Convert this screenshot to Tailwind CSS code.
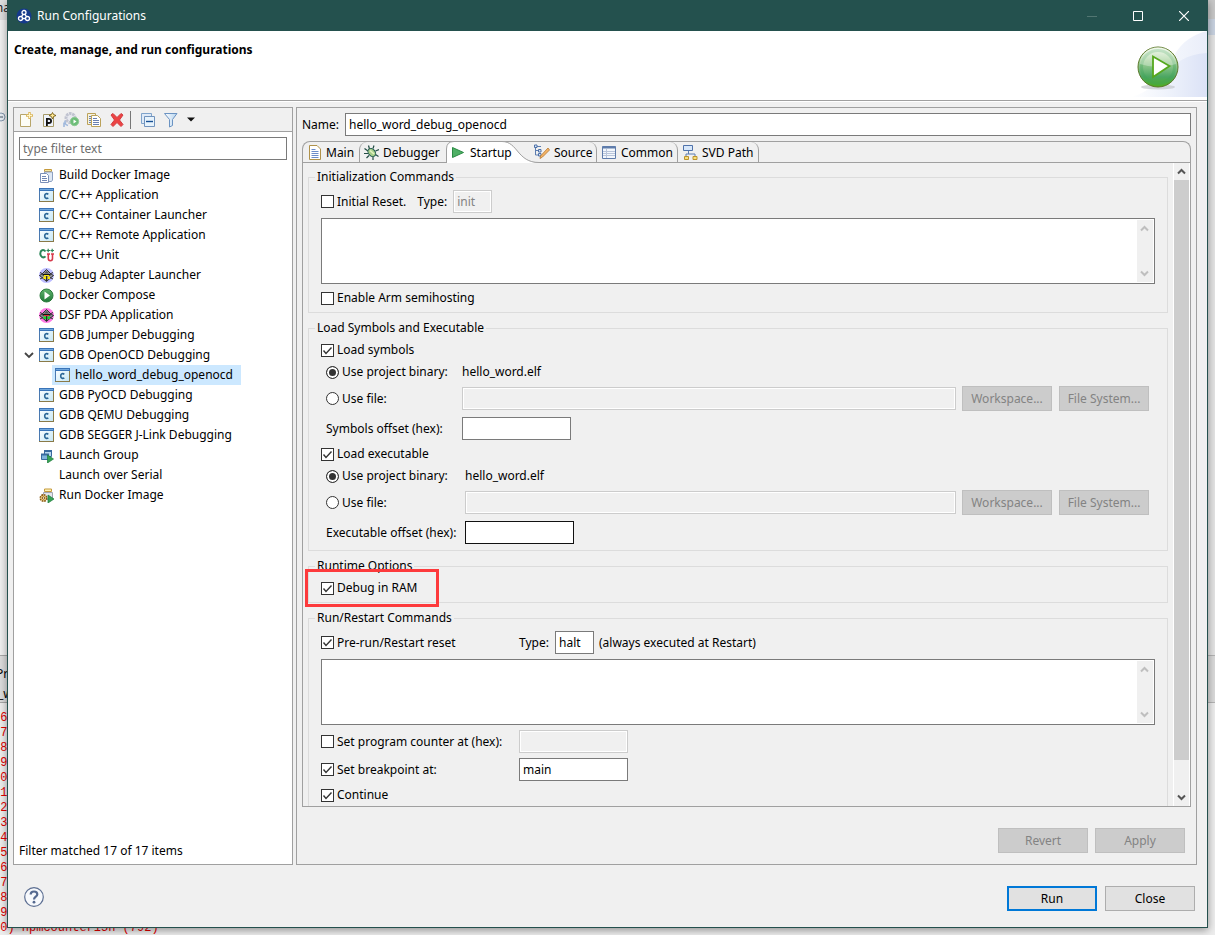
<!DOCTYPE html>
<html lang="en">
<head>
<meta charset="utf-8">
<title>Run Configurations</title>
<script src="https://cdn.jsdelivr.net/npm/@tailwindcss/browser@4"></script>
</head>
<body class="relative h-screen overflow-hidden bg-[#e4e4e4] font-['Noto_Sans','Noto_Sans_CJK_SC',sans-serif] text-xs text-black">

<svg class="absolute size-0" aria-hidden="true">
  <defs>
    <linearGradient id="gWin" x1="0" y1="0" x2="1" y2="1"><stop offset="0" stop-color="#fff"/><stop offset="1" stop-color="#c4e6f6"/></linearGradient>
    <linearGradient id="gGreen" x1="0" y1="0" x2="0" y2="1"><stop offset="0" stop-color="#5fb36c"/><stop offset="1" stop-color="#1f7a38"/></linearGradient>
    <linearGradient id="gBall" x1="0" y1="0" x2="0" y2="1"><stop offset="0" stop-color="#f2f9ea"/><stop offset=".35" stop-color="#a5d19b"/><stop offset=".75" stop-color="#4ba661"/><stop offset="1" stop-color="#4fae1c"/></linearGradient>
    <linearGradient id="gWash" x1="0" y1="0" x2="1" y2="0"><stop offset="0" stop-color="#fff"/><stop offset=".5" stop-color="#eef2fb"/><stop offset="1" stop-color="#dbe2f6"/></linearGradient>
    <linearGradient id="gFunnel" x1="0" y1="0" x2="1" y2="0"><stop offset="0" stop-color="#fff"/><stop offset="1" stop-color="#b5d3ee"/></linearGradient>
  </defs>
  <symbol id="capp" viewBox="0 0 15 14">
    <rect x=".5" y=".5" width="14" height="13" fill="url(#gWin)" stroke="#8a7a48"/>
    <path d="M.5 13V.5" stroke="#4a79b0"/><path d="M0 1.500h15" stroke="#3a74b8" stroke-width="3"/><path d="M1 1.500h13" stroke="#6fa6dc"/>
    <path d="M9.300 6.300C8 5.200 5.700 5.500 5.700 8c0 2.500 2.300 2.900 3.600 1.800" fill="none" stroke="#2a6595" stroke-width="1.600"/>
  </symbol>
  <symbol id="build" viewBox="0 0 15 15">
    <path d="M5.500 1.500h7v2h-7z" fill="#f6e7a0" stroke="#c59a3c"/><path d="M5.500 4h8v8l-1 1.500h-7z" fill="#dfe8f4" stroke="#8da0c0"/>
    <path d="M1.500 5.500h6l2 2v7h-8z" fill="#fff" stroke="#7b90b8"/><path d="M3 8.500h4M3 10.500h5M3 12.500h5" stroke="#6f86b4"/>
  </symbol>
  <symbol id="cunit" viewBox="0 0 15 15">
    <path d="M6.500 3.500C4.500 1 1.300 2 1.300 5.500s3.200 5 5.200 2.800" fill="none" stroke="#2b8658" stroke-width="2"/>
    <path d="M7.500 2.500H11M9.200.800v3.400M11.500 2.500H15M13.200.800v3.400" stroke="#2b8658" stroke-width="1.200"/>
    <path d="M8 6h3M12 6h3M9.300 6v4.500c0 3 4.200 3 4.200 0V6" fill="none" stroke="#d63a4c" stroke-width="1.600"/>
  </symbol>
  <symbol id="adapter" viewBox="0 0 15 15">
    <circle cx="7.500" cy="7.500" r="7.500" fill="#bcbcff"/><path d="M7.500 1.500L12 6l2.500 1.500L12 9.500 7.500 13.500 3 9.500.5 7.500 3 6z" fill="#9a9aa4" stroke="#333"/><path d="M1 4.500l3 1.500M1 11l3-1.500M14 4.500L11 6M14 11l-3-1.500" stroke="#333"/>
    <path d="M5 5.500l2.500-2.500L10 5.500z" fill="#555"/><path d="M3.500 6h8v1.500h-8z" fill="#111"/><path d="M4.500 8.500H7V11H4.500zM8.500 8.500H11V11H8.500z" fill="#ffe800"/><path d="M7.700 7v6" stroke="#111"/><path d="M5 7.500h5" stroke="#ffe800"/>
  </symbol>
  <symbol id="dsf" viewBox="0 0 15 15">
    <circle cx="7.500" cy="7.500" r="7.500" fill="#ff7ae6"/><path d="M7.500 1.500L12 6l2.500 1.500L12 9.500 7.500 13.500 3 9.500.5 7.500 3 6z" fill="#8a8a90" stroke="#333"/><path d="M1 4.500l3 1.500M1 11l3-1.500M14 4.500L11 6M14 11l-3-1.500" stroke="#333"/>
    <path d="M5 5.500l2.500-2.500L10 5.500z" fill="#555"/><path d="M3.500 6h8v1.500h-8z" fill="#111"/><path d="M4.500 8.500H7V11H4.500zM8.500 8.500H11V11H8.500z" fill="#19d42c"/><path d="M7.700 7v6" stroke="#111"/><path d="M5 7.500h5" stroke="#e83030"/>
  </symbol>
  <symbol id="compose" viewBox="0 0 15 15">
    <circle cx="7.500" cy="7.500" r="6.500" fill="url(#gGreen)" stroke="#2b7a3c"/><path d="M5.500 3.500L11 7.500l-5.500 4z" fill="#fff"/>
  </symbol>
  <symbol id="group" viewBox="0 0 15 15">
    <path d="M5.500 2.500h7v6h-7z" fill="#b7d7ef" stroke="#386a9e"/><path d="M5 3h8" stroke="#386a9e" stroke-width="2"/>
    <path d="M2.500 6.500h7v5h-7z" fill="#7fb3dc" stroke="#386a9e"/><path d="M2 6.500h8" stroke="#386a9e" stroke-width="2"/><path d="M8.500 7l6 4-6 4z" fill="#37a256" stroke="#1d7a3a" stroke-width=".7"/>
  </symbol>
  <symbol id="rundocker" viewBox="0 0 15 15">
    <path d="M5.500 1h7v2.500h-7z" fill="#fff2b5" stroke="#c59a3c"/><path d="M4.500 4.500h9v7h-9z" fill="#e3e6ec" stroke="#a0a4b0"/>
    <circle cx="4.500" cy="10" r="3.200" fill="#f1d38a" stroke="#8b5a14" stroke-width="1.600" stroke-dasharray="1.700 .800"/><circle cx="4.500" cy="10" r="1.200" fill="#fff" stroke="#8b5a14"/><path d="M9 7l6 4-6 4z" fill="#37a256" stroke="#1d7a3a" stroke-width=".7"/>
  </symbol>
</svg>

<!-- workbench behind the dialog -->
<div class="absolute inset-0" aria-hidden="true">
  <div class="absolute left-0 top-0 h-[20px] w-2 overflow-hidden bg-[#dedede] text-[#222]"><span class="absolute -left-2">ma</span></div>
  <div class="absolute left-0 top-[20px] h-[635px] w-2 overflow-hidden bg-[#f0f0f0]"><svg class="absolute -left-1 top-[92px]" width="10" height="10"><circle cx="5" cy="5" r="4" fill="#e8eef4" stroke="#8598ae"/><path d="M3 5h4" stroke="#456"/></svg></div>
  <div class="absolute left-0 top-[655px] h-[48px] w-2 overflow-hidden border-y border-[#a8a8a8] bg-[#dcdcdc]"><span class="absolute -left-1 top-[10px]">Pr</span><span class="absolute -left-[2px] top-[30px]">_w</span></div>
  <div class="absolute bottom-0 left-0 top-[703px] w-full overflow-hidden bg-[#ededed] font-['Liberation_Mono',monospace] text-xs text-[#e00000]">
    <div class="-ml-[7px] pt-[8px] leading-[15px]">66<br>67<br>68<br>69<br>70<br>71<br>72<br>73<br>74<br>75<br>76<br>77<br>78<br>79<br>80) hpmcounter15h (792)</div>
  </div>
  <div class="absolute right-0 top-0 h-[19px] w-2 bg-[#c8c8c8]"></div>
  <div class="absolute right-0 top-[19px] h-[16px] w-2 bg-[#c8d2e0]"></div>
  <div class="absolute right-0 top-[655px] h-[48px] w-2 border-y border-[#b4b4b4] bg-[#dadada]"></div>
</div>

<div class="relative h-full px-[7px] pb-[7px]">
<main class="flex h-full flex-col border-x border-b border-[#24504d] bg-[#f0f0f0] shadow-[0_2px_8px_rgba(0,0,0,0.4)]">

  <header class="flex h-[31px] shrink-0 items-center bg-[#24514e] pl-2 text-white">
    <svg width="16" height="16" viewBox="0 0 16 16"><circle cx="8" cy="8" r="7.500" fill="#153a8c"/><g fill="none" stroke="#fff" stroke-width="1.300"><circle cx="8" cy="4.500" r="2"/><circle cx="4.500" cy="10.500" r="2"/><circle cx="11.500" cy="10.500" r="2"/><path d="M7 6.300L5.500 8.700M9 6.300l1.500 2.400M6.500 10.500h3"/></g></svg>
    <h1 class="ml-[5px] flex-1">Run Configurations</h1>
    <button class="flex h-full w-[46px] items-center justify-center" aria-label="Minimize" disabled><svg width="10" height="10"><path d="M0 5.500h10" stroke="#527672"/></svg></button>
    <button class="flex h-full w-[46px] items-center justify-center" aria-label="Maximize"><svg width="10" height="10"><path d="M.5.5h9v9h-9z" fill="none" stroke="#fff"/></svg></button>
    <button class="flex h-full w-[46px] items-center justify-center" aria-label="Close window"><svg width="10" height="10"><path d="M0 0l10 10M10 0L0 10" stroke="#fff" stroke-width="1.200"/></svg></button>
  </header>

  <section class="flex h-[70px] shrink-0 justify-between border-b border-[#a0a0a0] bg-white pl-1.5">
    <h2 class="pt-[11px] font-bold">Create, manage, and run configurations</h2>
    <svg width="76" height="66" viewBox="0 0 76 66">
      <path d="M0 66C12 64 34 50 40 30 50 10 62 4 76 0V66z" fill="url(#gWash)" opacity=".6"/><path d="M0 66C30 60 34 24 76 22V66z" fill="url(#gWash)"/>
      <ellipse cx="27" cy="56" rx="17" ry="2.500" fill="#c3c6cc" opacity=".7"/>
      <circle cx="27" cy="36" r="20" fill="url(#gBall)" stroke="#5d7a2b"/><circle cx="27" cy="36" r="16.500" fill="none" stroke="#3fa35a" stroke-width="3" opacity=".35"/><path d="M9 33a18 17 0 0 1 36 0q-18 6-36 0z" fill="#fff" opacity=".3"/>
      <path d="M22 25.500l16.500 9.500L22 46z" fill="#fff" stroke="#55a81e" stroke-width="1.800"/>
    </svg>
  </section>

  <div class="flex min-h-0 flex-1 gap-[3px] border-t border-white pl-[5px] pr-[10px] pt-[5px]">

    <aside class="flex w-[280px] shrink-0 flex-col border border-[#a0a0a0] bg-white">
      <div class="flex h-[24px] shrink-0 items-center border-b border-[#a0a0a0] bg-[#f0f0f0] pl-[5px]">
        <button aria-label="New launch configuration"><svg class="block" width="16" height="16"><path d="M1.500 2.500h8l2 3v9h-10z" fill="#fdfdf6" stroke="#b7a56a"/><path d="M10.500 0v7M7 3.500h7" stroke="#dcb860" stroke-width="2.500"/><path d="M10.500 1v5M8 3.500h5" stroke="#fff6c8"/></svg></button>
        <button class="ml-[7px]" aria-label="New prototype"><svg class="block" width="16" height="16"><path d="M1.500 2.500h10v12h-10z" fill="#eef3fb" stroke="#a69a68"/><path d="M4.900 14V6.800h1.800c3.200 0 3.200 4.200 0 4.200H5" fill="none" stroke="#111" stroke-width="1.800"/><path d="M10.500.500l1.100 2 2.400 1-2.400 1-1.100 2.500-1.100-2.500-2.400-1 2.400-1z" fill="#ffe994" stroke="#6d5208" stroke-width=".8"/></svg></button>
        <button class="ml-[5px]" aria-label="Export"><svg class="block" width="17" height="16"><circle cx="7.500" cy="6" r="4.500" fill="#e8eaf0" stroke="#c0c3d0" stroke-width="3" stroke-dasharray="2.500 .7"/><path d="M2 8.500c0 3 0 4 3 5M1 10.500V15" fill="none" stroke="#9fb8dc" stroke-width="1.600"/><circle cx="11.500" cy="9.500" r="4.200" fill="#6dbd79" stroke="#8fcb94"/><path d="M10.500 7.500l3 2-3 2z" fill="#fff"/></svg></button>
        <button class="ml-[6px]" aria-label="Duplicate"><svg class="block" width="16" height="16"><path d="M1.500 1.500h8v11h-8z" fill="#f6f2df" stroke="#bba25a"/><path d="M5.500 3.500h6l3 3v8h-9z" fill="#fff" stroke="#bba25a"/><path d="M3 4.500h2M3 6.500h2M3 8.500h2M3 10.500h2M7 6.500h4M7 8.500h6M7 10.500h6M7 12.500h6" stroke="#6880b2"/></svg></button>
        <button class="ml-[7px]" aria-label="Delete"><svg class="block" width="16" height="16"><path d="M2 3l2-1.500 4 4 4-4L14 3l-3.500 5L14 12.500 12 14.500l-4-4-4 4-2-2L5.500 8z" fill="#ec4444" stroke="#d23c40" stroke-linejoin="round"/></svg></button>
        <span class="ml-[5px] h-[18px] w-px bg-[#777]"></span>
        <button class="ml-[10px]" aria-label="Collapse all"><svg class="block" width="14" height="14"><path d="M.5.5h10v10H.5z" fill="#dfeaf7" stroke="#7fa3cb"/><path d="M3.500 3.500h10v10h-10z" fill="#e7f3fc" stroke="#7193bd"/><path d="M5 8.500h7" stroke="#174f94" stroke-width="1.400"/></svg></button>
        <button class="ml-[9px]" aria-label="Filter"><svg class="block" width="14" height="16"><path d="M.5 1.500h12.500L8.500 7.500v6l-3 1.500v-7.500z" fill="url(#gFunnel)" stroke="#6b93c2"/></svg></button>
        <button class="ml-[9px]" aria-label="Filter menu"><svg class="block" width="8" height="5"><path d="M0 .5h8L4 4.500z" fill="#111"/></svg></button>
      </div>
      <input aria-label="Filter text" placeholder="type filter text" class="mx-[5px] mt-[5px] h-[23px] shrink-0 border border-[#7a7a7a] bg-white px-[3px] outline-none placeholder:text-[#6d6d6d]">
      <ul class="mt-[5px] flex-1 pl-[25px] leading-5">
        <li class="flex h-5 items-center gap-[5px]"><svg width="15" height="15"><use href="#build"/></svg>Build Docker Image</li>
        <li class="flex h-5 items-center gap-[5px]"><svg width="15" height="14"><use href="#capp"/></svg>C/C++ Application</li>
        <li class="flex h-5 items-center gap-[5px]"><svg width="15" height="14"><use href="#capp"/></svg>C/C++ Container Launcher</li>
        <li class="flex h-5 items-center gap-[5px]"><svg width="15" height="14"><use href="#capp"/></svg>C/C++ Remote Application</li>
        <li class="flex h-5 items-center gap-[5px]"><svg width="15" height="15"><use href="#cunit"/></svg>C/C++ Unit</li>
        <li class="flex h-5 items-center gap-[5px]"><svg width="15" height="15"><use href="#adapter"/></svg>Debug Adapter Launcher</li>
        <li class="flex h-5 items-center gap-[5px]"><svg width="15" height="15"><use href="#compose"/></svg>Docker Compose</li>
        <li class="flex h-5 items-center gap-[5px]"><svg width="15" height="15"><use href="#dsf"/></svg>DSF PDA Application</li>
        <li class="flex h-5 items-center gap-[5px]"><svg width="15" height="14"><use href="#capp"/></svg>GDB Jumper Debugging</li>
        <li>
          <div class="-ml-[15px] flex h-5 items-center gap-[5px]"><svg width="10" height="8"><path d="M1 2l4 4 4-4" fill="none" stroke="#444" stroke-width="1.800"/></svg><svg width="15" height="14"><use href="#capp"/></svg>GDB OpenOCD Debugging</div>
          <ul class="flex pl-[13px]"><li class="flex h-5 items-center gap-[5px] bg-[#cce8ff] pl-[3px] pr-2"><svg width="15" height="14"><use href="#capp"/></svg>hello_word_debug_openocd</li></ul>
        </li>
        <li class="flex h-5 items-center gap-[5px]"><svg width="15" height="14"><use href="#capp"/></svg>GDB PyOCD Debugging</li>
        <li class="flex h-5 items-center gap-[5px]"><svg width="15" height="14"><use href="#capp"/></svg>GDB QEMU Debugging</li>
        <li class="flex h-5 items-center gap-[5px]"><svg width="15" height="14"><use href="#capp"/></svg>GDB SEGGER J-Link Debugging</li>
        <li class="flex h-5 items-center gap-[5px]"><svg width="15" height="15"><use href="#group"/></svg>Launch Group</li>
        <li class="h-5 pl-5">Launch over Serial</li>
        <li class="flex h-5 items-center gap-[5px]"><svg width="15" height="15"><use href="#rundocker"/></svg>Run Docker Image</li>
      </ul>
      <p class="pb-[4px] pl-[5px] leading-[18px]">Filter matched 17 of 17 items</p>
    </aside>

    <section class="flex min-w-0 flex-1 flex-col border border-[#a0a0a0] px-[5px] pt-[5px]">
      <div class="flex h-[23px] shrink-0 items-center">
        <label for="name" class="w-[43px]">Name:</label>
        <input id="name" value="hello_word_debug_openocd" class="h-[23px] min-w-0 flex-1 border border-[#7a7a7a] bg-white px-[3px] outline-none">
      </div>

      <div role="tablist" class="mt-[5px] flex h-[22px] shrink-0 rounded-t-lg border-x border-t border-[#a0a0a0] leading-[21px]">
        <button role="tab" class="flex w-[56px] items-center gap-[5px] border-b border-[#a0a0a0] pl-[6px]"><svg class="shrink-0" width="12" height="15"><path d="M.5.5h7.500l3.500 3.500v10.500H.5z" fill="#fff" stroke="#b0924a"/><path d="M2.500 4.500h4M2.500 6.500h7M2.500 8.500h7M2.500 10.500h7M2.500 12.500h7" stroke="#6c8cc8"/></svg>Main</button>
        <button role="tab" class="flex w-[87px] items-center gap-[4px] rounded-tl-lg border-b border-l border-[#a0a0a0] pl-[4px]"><svg class="shrink-0" width="15" height="15"><path d="M5.500 4L4.500.5M9 3.500l1-3M4 6L.5 3.500M4 8.500l-4 0M5 10.500l-2.500 2.500M9 12l0 3M11.500 9.500l3 2M11.500 6L15 4.500" stroke="#234c44" stroke-width="1.200"/><ellipse cx="7.800" cy="7.500" rx="3.300" ry="4.500" transform="rotate(-40 7.800 7.500)" fill="#a7cf8a" stroke="#235b50"/><path d="M6 5.500l4 3.500" stroke="#e3f2c0" stroke-width="1.500"/></svg>Debugger</button>
        <button role="tab" aria-selected="true" class="relative w-[85px] text-left">
          <svg class="absolute left-0 -top-px" width="94" height="22"><path d="M.5 22V8Q.5.5 8 .5H56C72 .5 71 21.500 93 21.500V22z" fill="#fff"/><path d="M.5 22V8Q.5.5 8 .5H56C72 .5 71 21.500 93 21.500" fill="none" stroke="#a0a0a0"/></svg>
          <span class="relative flex items-center gap-[6px] pl-[6px]"><svg width="12" height="11"><path d="M.5.5l11 5-11 5z" fill="#4fb065" stroke="#2b8a45"/></svg>Startup</span>
        </button>
        <button role="tab" class="flex w-[66px] items-center gap-[4px] rounded-tr-lg border-b border-r border-[#a0a0a0] pl-[3px]"><svg class="relative shrink-0" width="16" height="16"><path d="M1.500 2v9h3M1.500 6.500h3M3 2.500h4" fill="none" stroke="#5c7db0"/><path d="M.5 1h2.500v2.500H.5zM4.500 5.500H7V8H4.500zM4.500 9.500H7V12H4.500z" fill="#dbe6f5" stroke="#4c70a8"/><path d="M14 4l1.500 2L8.500 13 6 14.500 6.500 12z" fill="#f3b468" stroke="#b5762c" stroke-width=".8"/></svg>Source</button>
        <button role="tab" class="flex w-[81px] items-center gap-[5px] rounded-tr-lg border-b border-r border-[#a0a0a0] pl-[5px]"><svg class="shrink-0" width="14" height="13"><path d="M.5.5h13v12H.5z" fill="#f3f7fc" stroke="#5f7cab"/><path d="M.5 1.500h13" stroke="#5f7cab" stroke-width="2"/><path d="M4.500 3v9M1 5.500h12M1 7.500h12M1 9.500h12" stroke="#b9c5da"/></svg>Common</button>
        <button role="tab" class="flex w-[81px] items-center gap-[4px] rounded-tr-lg border-b border-r border-[#a0a0a0] pl-[5px]"><svg class="shrink-0" width="15" height="15"><path d="M.5.5h9v5h-9z" fill="#d7e7fa" stroke="#4f72ab"/><path d="M5.500 6v3M3 12V9h9v3" fill="none" stroke="#5c7db0"/><path d="M1.500 11.500h4v3h-4zM10 11.500h4v3h-4z" fill="#f8e17c" stroke="#bd922e"/></svg>SVD Path</button>
        <span class="flex-1 border-b border-[#a0a0a0]"></span>
      </div>

      <div class="flex min-h-0 flex-1 border-x border-b border-[#a0a0a0]">
        <div class="flex min-w-0 flex-1 flex-col gap-[6px] overflow-hidden pl-[5px] pr-[5px] pt-[5px]">

          <fieldset class="min-w-0 shrink-0 border border-[#dcdcdc] px-3 pb-[5px]">
            <legend class="-ml-[6px] px-[2px] leading-[18px]">Initialization Commands</legend>
            <div class="mt-[4px] flex h-[23px] items-center">
              <label class="flex items-center gap-[3px]"><input type="checkbox" class="size-[13px] appearance-none border border-[#333] bg-white">Initial Reset.</label>
              <label for="initType" class="ml-[11px] mr-[6px]">Type:</label>
              <input id="initType" value="init" disabled class="h-[23px] w-[39px] border border-[#ccc] bg-[#f0f0f0] px-[3px] text-[#838383] shadow-[inset_0_0_0_1px_white]">
            </div>
            <div class="mt-[5px] flex h-[66px] border border-[#7a7a7a] bg-white p-px">
              <textarea aria-label="Initialization commands" class="min-w-0 flex-1 resize-none p-1 outline-none"></textarea>
              <div class="flex w-4 flex-col items-center justify-between bg-[#f0f0f0] py-[5px] pr-px"><svg width="9" height="7"><path d="M1 5.500l3.500-3.500L8 5.500" fill="none" stroke="#bfbfbf" stroke-width="2"/></svg><svg width="9" height="7"><path d="M1 1.500L4.500 5 8 1.500" fill="none" stroke="#bfbfbf" stroke-width="2"/></svg></div>
            </div>
            <label class="mt-[5px] flex h-[18px] w-fit items-center gap-[3px]"><input type="checkbox" class="size-[13px] appearance-none border border-[#333] bg-white">Enable Arm semihosting</label>
          </fieldset>

          <fieldset class="min-w-0 shrink-0 border border-[#dcdcdc] px-3 pb-[6px]">
            <legend class="-ml-[6px] px-[2px] leading-[18px]">Load Symbols and Executable</legend>
            <label class="mt-[4px] flex h-[18px] w-fit items-center gap-[3px]"><span class="grid"><input type="checkbox" checked class="peer size-[13px] appearance-none border border-[#333] bg-white [grid-area:1/1]"><svg class="pointer-events-none invisible [grid-area:1/1] peer-checked:visible" width="13" height="13"><path d="M2.500 6.500l2.500 3 5.500-6" fill="none" stroke="#333" stroke-width="1.400"/></svg></span>Load symbols</label>
            <div class="mt-[4px] flex h-[18px] items-center pl-[5px]">
              <label class="flex w-[136px] items-center gap-[3px]"><input type="radio" name="sym" checked class="size-[13px] appearance-none rounded-full border border-[#333] bg-white checked:bg-[#333] checked:shadow-[inset_0_0_0_2px_white]">Use project binary:</label>hello_word.elf
            </div>
            <div class="mt-[5px] flex h-[25px] items-center pl-[5px]">
              <label class="flex w-[136px] items-center gap-[3px]"><input type="radio" name="sym" class="size-[13px] appearance-none rounded-full border border-[#333] bg-white checked:bg-[#333] checked:shadow-[inset_0_0_0_2px_white]">Use file:</label>
              <input aria-label="Symbols file" disabled class="h-[23px] min-w-0 flex-1 border border-[#ccc] bg-[#f0f0f0] px-[3px] shadow-[inset_0_0_0_1px_white]">
              <button disabled class="ml-[6px] h-[25px] w-[90px] border border-[#bfbfbf] bg-[#ccc] text-[#838383]">Workspace...</button>
              <button disabled class="ml-[7px] mr-[6px] h-[25px] w-[90px] border border-[#bfbfbf] bg-[#ccc] text-[#838383]">File System...</button>
            </div>
            <div class="mt-[6px] flex h-[23px] items-center pl-[5px]">
              <label for="symOff" class="w-[136px]">Symbols offset (hex):</label><input id="symOff" class="h-[23px] w-[109px] border border-[#7a7a7a] bg-white px-[3px] outline-none">
            </div>
            <label class="mt-[5px] flex h-[18px] w-fit items-center gap-[3px]"><span class="grid"><input type="checkbox" checked class="peer size-[13px] appearance-none border border-[#333] bg-white [grid-area:1/1]"><svg class="pointer-events-none invisible [grid-area:1/1] peer-checked:visible" width="13" height="13"><path d="M2.500 6.500l2.500 3 5.500-6" fill="none" stroke="#333" stroke-width="1.400"/></svg></span>Load executable</label>
            <div class="mt-[4px] flex h-[18px] items-center pl-[5px]">
              <label class="flex w-[139px] items-center gap-[3px]"><input type="radio" name="exe" checked class="size-[13px] appearance-none rounded-full border border-[#333] bg-white checked:bg-[#333] checked:shadow-[inset_0_0_0_2px_white]">Use project binary:</label>hello_word.elf
            </div>
            <div class="mt-[5px] flex h-[25px] items-center pl-[5px]">
              <label class="flex w-[139px] items-center gap-[3px]"><input type="radio" name="exe" class="size-[13px] appearance-none rounded-full border border-[#333] bg-white checked:bg-[#333] checked:shadow-[inset_0_0_0_2px_white]">Use file:</label>
              <input aria-label="Executable file" disabled class="h-[23px] min-w-0 flex-1 border border-[#ccc] bg-[#f0f0f0] px-[3px] shadow-[inset_0_0_0_1px_white]">
              <button disabled class="ml-[6px] h-[25px] w-[90px] border border-[#bfbfbf] bg-[#ccc] text-[#838383]">Workspace...</button>
              <button disabled class="ml-[7px] mr-[6px] h-[25px] w-[90px] border border-[#bfbfbf] bg-[#ccc] text-[#838383]">File System...</button>
            </div>
            <div class="mt-[6px] flex h-[23px] items-center pl-[5px]">
              <label for="exeOff" class="w-[139px]">Executable offset (hex):</label><input id="exeOff" class="h-[23px] w-[109px] border border-[#111] bg-white px-[3px] outline-none">
            </div>
          </fieldset>

          <fieldset class="relative min-w-0 shrink-0 border border-[#dcdcdc] px-3 pb-[5px]">
            <legend class="-ml-[6px] px-[2px] leading-[18px]">Runtime Options</legend>
            <label class="mt-[4px] flex h-[18px] w-fit items-center gap-[3px]"><span class="grid"><input type="checkbox" checked class="peer size-[13px] appearance-none border border-[#333] bg-white [grid-area:1/1]"><svg class="pointer-events-none invisible [grid-area:1/1] peer-checked:visible" width="13" height="13"><path d="M2.500 6.500l2.500 3 5.500-6" fill="none" stroke="#333" stroke-width="1.400"/></svg></span>Debug in RAM</label>
            <span class="pointer-events-none absolute -bottom-[5px] -left-[4px] h-[38px] w-[134px] border-3 border-[#fd3a3c]"></span>
          </fieldset>

          <fieldset class="min-w-0 shrink-0 border border-[#dcdcdc] px-3 pb-8">
            <legend class="-ml-[6px] px-[2px] leading-[18px]">Run/Restart Commands</legend>
            <div class="mt-[4px] flex h-[23px] items-center">
              <label class="flex w-[198px] items-center gap-[3px]"><span class="grid"><input type="checkbox" checked class="peer size-[13px] appearance-none border border-[#333] bg-white [grid-area:1/1]"><svg class="pointer-events-none invisible [grid-area:1/1] peer-checked:visible" width="13" height="13"><path d="M2.500 6.500l2.500 3 5.500-6" fill="none" stroke="#333" stroke-width="1.400"/></svg></span>Pre-run/Restart reset</label>
              <label for="runType" class="w-[36px]">Type:</label>
              <input id="runType" value="halt" class="h-[23px] w-[39px] border border-[#7a7a7a] bg-white px-[3px] outline-none">
              <span class="ml-[5px]">(always executed at Restart)</span>
            </div>
            <div class="mt-[5px] flex h-[66px] border border-[#7a7a7a] bg-white p-px">
              <textarea aria-label="Run/Restart commands" class="min-w-0 flex-1 resize-none p-1 outline-none"></textarea>
              <div class="flex w-4 flex-col items-center justify-between bg-[#f0f0f0] py-[5px] pr-px"><svg width="9" height="7"><path d="M1 5.500l3.500-3.500L8 5.500" fill="none" stroke="#bfbfbf" stroke-width="2"/></svg><svg width="9" height="7"><path d="M1 1.500L4.500 5 8 1.500" fill="none" stroke="#bfbfbf" stroke-width="2"/></svg></div>
            </div>
            <div class="mt-[5px] flex h-[23px] items-center">
              <label class="flex w-[198px] items-center gap-[3px]"><input type="checkbox" class="size-[13px] appearance-none border border-[#333] bg-white">Set program counter at (hex):</label>
              <input aria-label="Program counter" disabled class="h-[23px] w-[109px] border border-[#ccc] bg-[#f0f0f0] px-[3px] shadow-[inset_0_0_0_1px_white]">
            </div>
            <div class="mt-[5px] flex h-[23px] items-center">
              <label class="flex w-[198px] items-center gap-[3px]"><span class="grid"><input type="checkbox" checked class="peer size-[13px] appearance-none border border-[#333] bg-white [grid-area:1/1]"><svg class="pointer-events-none invisible [grid-area:1/1] peer-checked:visible" width="13" height="13"><path d="M2.500 6.500l2.500 3 5.500-6" fill="none" stroke="#333" stroke-width="1.400"/></svg></span>Set breakpoint at:</label>
              <input aria-label="Breakpoint location" value="main" class="h-[23px] w-[109px] border border-[#7a7a7a] bg-white px-[3px] outline-none">
            </div>
            <label class="mt-[5px] flex h-[18px] w-fit items-center gap-[3px]"><span class="grid"><input type="checkbox" checked class="peer size-[13px] appearance-none border border-[#333] bg-white [grid-area:1/1]"><svg class="pointer-events-none invisible [grid-area:1/1] peer-checked:visible" width="13" height="13"><path d="M2.500 6.500l2.500 3 5.500-6" fill="none" stroke="#333" stroke-width="1.400"/></svg></span>Continue</label>
          </fieldset>
        </div>

        <div class="flex w-[17px] shrink-0 flex-col items-center border-x border-white" aria-hidden="true">
          <svg class="my-[5px] shrink-0" width="9" height="7"><path d="M1 5.500l3.500-3.500L8 5.500" fill="none" stroke="#555" stroke-width="2"/></svg>
          <div class="w-full flex-1 bg-[#cdcdcd]"></div>
          <svg class="mb-[5px] mt-[34px] shrink-0" width="9" height="7"><path d="M1 1.500L4.500 5 8 1.500" fill="none" stroke="#555" stroke-width="2"/></svg>
        </div>
      </div>

      <div class="flex justify-end gap-[7px] px-[6px] pb-[11px] pt-[21px]">
        <button disabled class="h-[25px] w-[90px] border border-[#bfbfbf] bg-[#ccc] text-[#838383]">Revert</button>
        <button disabled class="h-[25px] w-[90px] border border-[#bfbfbf] bg-[#ccc] text-[#838383]">Apply</button>
      </div>
    </section>
  </div>

  <footer class="flex h-[62px] shrink-0 items-center pl-4 pr-3 pt-[5px]">
    <button aria-label="Help" class="mb-1"><svg class="block" width="20" height="20"><circle cx="10" cy="10" r="9.300" fill="#f7f9fc" stroke="#5d6f92" stroke-width="1.200"/><path d="M6.700 7.500C6.700 3.500 13.300 3.500 13.300 7.500c0 2.200-3.300 2.300-3.300 5" fill="none" stroke="#566a90" stroke-width="2.200"/><circle cx="10" cy="15.200" r="1.400" fill="#566a90"/></svg></button>
    <button class="ml-auto h-[25px] w-[90px] border-2 border-[#0078d7] bg-[#e1e1e1]">Run</button>
    <button class="ml-2 h-[25px] w-[90px] border border-[#adadad] bg-[#e1e1e1]">Close</button>
  </footer>
</main>
</div>
</body>
</html>
